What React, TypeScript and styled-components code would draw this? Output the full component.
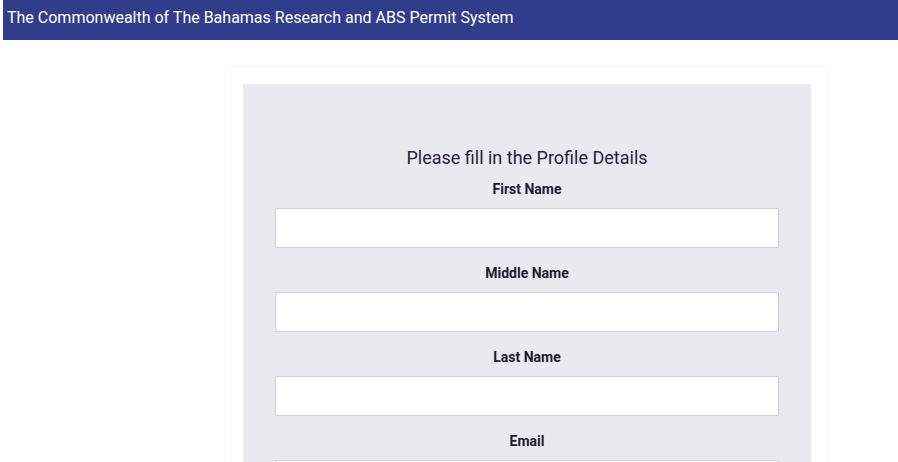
import React from "react";
import styled, { createGlobalStyle } from "styled-components";

const GlobalStyle = createGlobalStyle`
body {
  margin: 0;
  background-color: #ffffff;
  font-family: Roboto, "Liberation Sans", Arial, sans-serif;
  overflow: hidden;
}
`;

const Header = styled.header`
  margin-left: 3px;
  height: 40px;
  box-sizing: border-box;
  padding: 6px 4px 0;
  background-color: #303d8b;
  color: #ffffff;
  font-size: 16px;
  line-height: 24px;
`;

const Layout = styled.main`
  display: grid;
  grid-template-columns: 226px 601px;
  padding-top: 27px;
`;

const Card = styled.section`
  grid-column: 2;
  box-sizing: border-box;
  padding: 17px 16px 16px 17px;
  background: #ffffff;
  border-radius: 6px;
  box-shadow: 0 0 4px rgba(0, 0, 0, 0.07);
`;

const Panel = styled.div`
  background-color: #e9eaf0;
  padding: 60px 32px 32px;
  display: flex;
  flex-direction: column;
`;

const Title = styled.h2`
  margin: 0 0 7.5px;
  font-size: 18px;
  font-weight: 400;
  line-height: 27px;
  text-align: center;
  color: #2a1c3c;
`;

const Field = styled.div`
  display: flex;
  flex-direction: column;
  margin-bottom: 14.5px;
`;

const Label = styled.label`
  font-size: 14px;
  font-weight: 700;
  line-height: 21px;
  text-align: center;
  color: #221a30;
  margin-bottom: 8.5px;
`;

const Input = styled.input`
  box-sizing: border-box;
  height: 40px;
  width: 100%;
  border: 1px solid #cfd1dd;
  border-radius: 0;
  background: #ffffff;
  font-family: inherit;
  font-size: 14px;
  padding: 0 10px;
  outline: none;
`;

const fields = ["First Name", "Middle Name", "Last Name", "Email", "Phone"];

export default function App() {
  return (
    <>
      <GlobalStyle />
      <Header>The Commonwealth of The Bahamas Research and ABS Permit System</Header>
      <Layout>
        <Card>
          <Panel>
            <Title>Please fill in the Profile Details</Title>
            {fields.map((f) => (
              <Field key={f}>
                <Label>{f}</Label>
                <Input type="text" />
              </Field>
            ))}
          </Panel>
        </Card>
      </Layout>
    </>
  );
}
